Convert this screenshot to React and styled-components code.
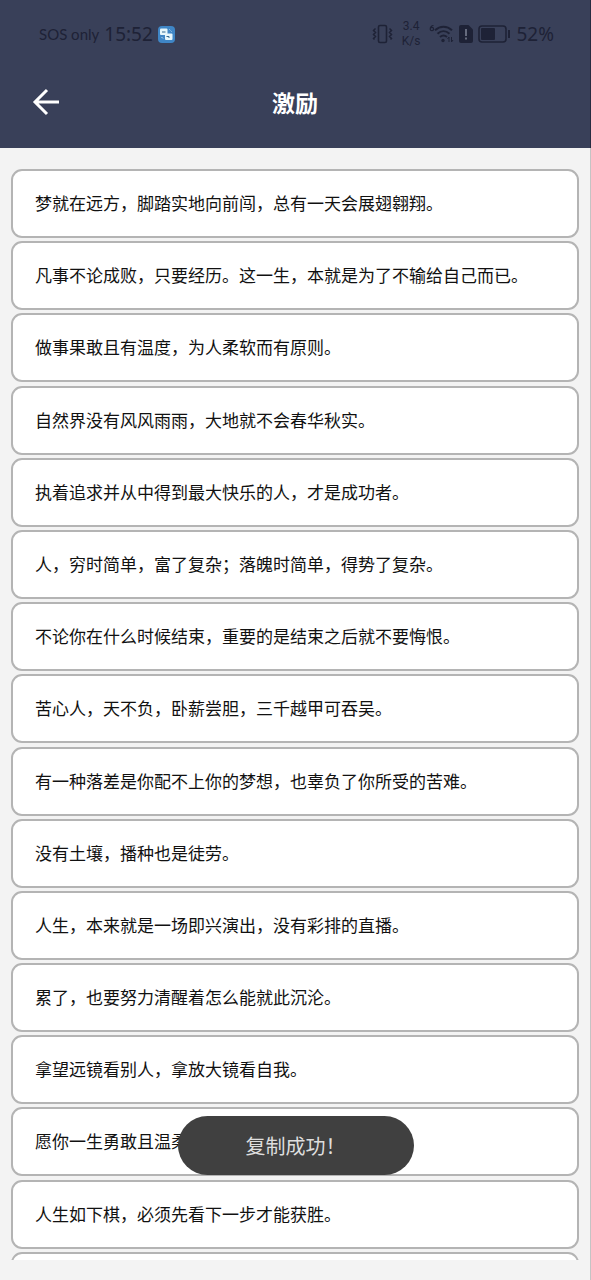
import React, { useState } from 'react'
import styled, { createGlobalStyle } from "styled-components";

const quotes = [
  '梦就在远方，脚踏实地向前闯，总有一天会展翅翱翔。',
  '凡事不论成败，只要经历。这一生，本就是为了不输给自己而已。',
  '做事果敢且有温度，为人柔软而有原则。',
  '自然界没有风风雨雨，大地就不会春华秋实。',
  '执着追求并从中得到最大快乐的人，才是成功者。',
  '人，穷时简单，富了复杂；落魄时简单，得势了复杂。',
  '不论你在什么时候结束，重要的是结束之后就不要悔恨。',
  '苦心人，天不负，卧薪尝胆，三千越甲可吞吴。',
  '有一种落差是你配不上你的梦想，也辜负了你所受的苦难。',
  '没有土壤，播种也是徒劳。',
  '人生，本来就是一场即兴演出，没有彩排的直播。',
  '累了，也要努力清醒着怎么能就此沉沦。',
  '拿望远镜看别人，拿放大镜看自我。',
  '愿你一生勇敢且温柔。',
  '人生如下棋，必须先看下一步才能获胜。',
  '',
]

function StatusBar() {
  return (
    <Status>
      <StatusGroup>
        <Carrier>SOS only</Carrier>
        <Clock>15:52</Clock>
        <AppIcon />
      </StatusGroup>
      <StatusGroup>
        <VibrateIcon />
        <Speed>
          <span>3.4</span>
          <span>K/s</span>
        </Speed>
        <WifiIcon />
        <SimIcon />
        <BatteryIcon />
        <Percent>52%</Percent>
      </StatusGroup>
    </Status>
  )
}

function App() {
  const [toast, setToast] = useState('复制成功！')

  const copy = (text) => {
    navigator.clipboard?.writeText(text)
    setToast('复制成功！')
  }

  return (
    <Page>
      <GlobalStyle />
      <Header>
        <StatusBar />
        <NavBar>
          <BackButton type="button" aria-label="返回">
            <svg width="28" height="28" viewBox="0 0 28 28" fill="none" stroke="#fff" strokeWidth="3">
              <path d="M15 2 3 14l12 12M3 14h24" />
            </svg>
          </BackButton>
          <Title>激励</Title>
        </NavBar>
      </Header>
      <Scroller>
        <List>
          {quotes.map((text, i) => (
            <Item key={i}>
              <Quote type="button" onClick={() => copy(text)}>{text}</Quote>
            </Item>
          ))}
        </List>
      </Scroller>
      { toast && <Toast role="status">{toast}</Toast> }
    </Page>
  )
}

export default App

function AppIcon() {
  return (
    <svg width="17" height="17" viewBox="0 0 17 17">
      <rect width="17" height="17" rx="4" fill="#3f86c6" />
      <rect x="2" y="2.500" width="7.500" height="6.500" rx="1" fill="#e6f6fb" />
      <rect x="7" y="7.500" width="7.500" height="6.500" rx="1" fill="#e6f6fb" />
      <path d="M4 6h3.500M8.500 10.500h2.500v1.500" stroke="#34688f" fill="none" />
      <path d="M11.500 3.500l2 2M3.500 11l2 2" stroke="#d4eefa" strokeDasharray="1.200 1" />
    </svg>
  )
}

function VibrateIcon() {
  return (
    <svg width="21" height="20" viewBox="0 0 21 20" fill="none" stroke="#1e2236">
      <rect x="6.500" y="1.500" width="8" height="17" rx="1.500" strokeWidth="1.600" />
      <path d="M3.500 4.500 1.500 6.500l2 2-2 2 2 2-2 2 1 1M17.500 4.500l2 2-2 2 2 2-2 2 2 2-1 1" strokeWidth="1.500" />
    </svg>
  )
}

function WifiIcon() {
  return (
    <svg width="25" height="20" viewBox="0 0 25 20" fill="none" stroke="#1e2236">
      <path d="M4.500 1.500C2.500 1.500 1.200 3 1.200 5.200a1.700 1.700 0 1 0 1.700-1.900c-.8 0-1.300.4-1.600.9" strokeWidth="1.200" />
      <path d="M6 6.300c5-4.700 12-4.700 17 0M8.500 9.700c3.600-3.300 8.400-3.300 12 0M11 13c2.200-1.900 4.800-1.900 7 0" strokeWidth="2" />
      <circle cx="14" cy="16.500" r="1.700" fill="#1e2236" stroke="none" />
      <path d="M20 18v-5l-1.500 2M22.500 13v5l1.500-2" strokeWidth="1" />
    </svg>
  )
}

function SimIcon() {
  return (
    <svg width="14" height="18" viewBox="0 0 14 18">
      <path d="M2 0h7.500L14 4.500V16a2 2 0 0 1-2 2H2a2 2 0 0 1-2-2V2a2 2 0 0 1 2-2z" fill="#1e2236" />
      <path d="M7 4v7M7 12.500v2" stroke="#7f8496" strokeWidth="1.500" />
    </svg>
  )
}

function BatteryIcon() {
  return (
    <svg width="33" height="18" viewBox="0 0 33 18">
      <rect x="1" y="1" width="27" height="16" rx="3" fill="none" stroke="#1e2236" strokeWidth="1.600" />
      <rect x="3" y="3" width="14" height="12" rx="1" fill="#1e2236" />
      <path d="M31 5v8" stroke="#1e2236" strokeWidth="2" />
    </svg>
  )
}

const GlobalStyle = createGlobalStyle`
  * {
    box-sizing: border-box;
  }
  body {
    margin: 0;
    background: #f3f3f3;
    font-family: "Noto Sans CJK SC", sans-serif;
  }
`

const Page = styled.div`
  display: flex;
  flex-direction: column;
  height: 100vh;
  padding-bottom: 20px;
  border-right: 1px solid #c4c4c4;
`

const Header = styled.header`
  flex: none;
  margin-right: -1px;
  border-right: 1px solid #262c42;
  background: #394059;
`

const Status = styled.div`
  display: flex;
  justify-content: space-between;
  align-items: center;
  height: 68px;
  padding: 0 36px 0 39px;
  color: #1e2236;
  font-family: Lato, "Noto Sans", sans-serif;
`

const StatusGroup = styled.div`
  display: flex;
  align-items: center;
  gap: 5px;
`

const Carrier = styled.span`
  font-size: 15px;
`

const Clock = styled.span`
  font-family: "Noto Sans", sans-serif;
  font-size: 19px;
`

const Speed = styled.span`
  display: flex;
  flex-direction: column;
  align-items: center;
  margin: 0 4px;
  font-family: Roboto, sans-serif;
  font-size: 12px;
  line-height: 15px;
`

const Percent = styled.span`
  font-family: "Noto Sans", sans-serif;
  font-size: 19px;
`

const NavBar = styled.div`
  display: grid;
  grid-template-columns: 28px 1fr 28px;
  align-items: center;
  height: 80px;
  padding: 0 32px 12px;
`

const BackButton = styled.button`
  display: flex;
  padding: 0;
  border: 0;
  background: none;
  cursor: pointer;
`

const Title = styled.h1`
  margin: 0;
  color: #fff;
  font-size: 23px;
  font-weight: 700;
  line-height: 32px;
  text-align: center;
`

const Scroller = styled.main`
  flex: 1;
  min-height: 0;
  overflow: hidden;
`

const List = styled.ul`
  display: flex;
  flex-direction: column;
  justify-content: space-between;
  gap: 3px;
  height: calc(100% + 61px);
  margin: 0;
  padding: 21px 11px 0;
  list-style: none;
`

const Item = styled.li`
  display: flex;
  flex: none;
`

const Quote = styled.button`
  flex: 1;
  height: 69px;
  padding: 0 22px 2px;
  border: 2px solid #b4b4b4;
  border-radius: 11px;
  background: #fff;
  color: #111;
  font-family: inherit;
  font-size: 17px;
  text-align: left;
  cursor: pointer;
`

const Toast = styled.div`
  position: fixed;
  bottom: 105px;
  left: 50%;
  transform: translateX(-50%);
  padding: 0 68px;
  border-radius: 30px;
  background: #404040;
  color: #dedede;
  font-size: 20px;
  line-height: 59px;
  white-space: nowrap;
`
